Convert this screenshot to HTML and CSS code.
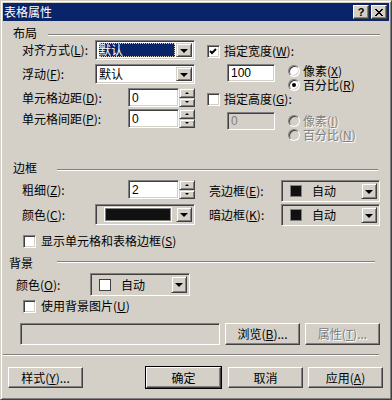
FILE: index.html
```html
<!DOCTYPE html>
<html>
<head>
    <title>表格属性</title>
    <link rel="stylesheet" href="styles.css">
</head>
<body>
    <div class="window">
        <div class="titlebar">
            <span class="title">表格属性</span>
            <div class="caption">
                <span class="cap-btn help">?</span>
                <span class="cap-btn">
                    <svg width="8" height="7" viewBox="0 0 8 7"><path d="M0 0L7 7M1 0L8 7M7 0L0 7M8 0L1 7" stroke="#000" stroke-width="1"/></svg>
                </span>
            </div>
        </div>

        <!-- 布局 -->
        <div class="group-head head-layout"><span class="head-text">布局</span><div class="line"></div></div>
        <div class="group-body">
            <div class="col-left">
                <div class="row row-select">
                    <label class="lbl lbl-short">对齐方式(<u>L</u>):</label>
                    <div class="combo combo-std">
                        <div class="combo-field"><span class="selected">默认</span></div>
                        <span class="drop"><i class="arrow"></i></span>
                    </div>
                </div>
                <div class="row row-select mt4">
                    <label class="lbl lbl-short">浮动(<u>F</u>):</label>
                    <div class="combo combo-std">
                        <div class="combo-field"><span class="value">默认</span></div>
                        <span class="drop"><i class="arrow"></i></span>
                    </div>
                </div>
                <div class="row row-spin mt4">
                    <label class="lbl lbl-long">单元格边距(<u>D</u>):</label>
                    <div class="field spin-field">0</div>
                    <div class="spin"><span class="spin-btn"><i class="arrow-up"></i></span><span class="spin-btn"><i class="arrow-small"></i></span></div>
                </div>
                <div class="row row-spin mt2">
                    <label class="lbl lbl-long">单元格间距(<u>P</u>):</label>
                    <div class="field spin-field">0</div>
                    <div class="spin"><span class="spin-btn"><i class="arrow-up"></i></span><span class="spin-btn"><i class="arrow-small"></i></span></div>
                </div>
            </div>
            <div class="col-right">
                <div class="row check-row check-first">
                    <span class="check"><svg width="9" height="9" viewBox="0 0 9 9"><path d="M1 4L3 6L7 2" fill="none" stroke="#000" stroke-width="2"/></svg></span>
                    <span>指定宽度(<u>W</u>):</span>
                </div>
                <div class="size-row">
                    <div class="field size-field">100</div>
                    <div class="radios">
                        <div class="radio-line"><span class="radio"></span>像素(<u>X</u>)</div>
                        <div class="radio-line"><span class="radio on"></span>百分比(<u>R</u>)</div>
                    </div>
                </div>
                <div class="row check-row">
                    <span class="check"></span>
                    <span>指定高度(<u>G</u>):</span>
                </div>
                <div class="size-row size-row-off">
                    <div class="field size-field disabled">0</div>
                    <div class="radios">
                        <div class="radio-line off"><span class="radio"></span>像素(<u>I</u>)</div>
                        <div class="radio-line off"><span class="radio"></span>百分比(<u>N</u>)</div>
                    </div>
                </div>
            </div>
        </div>

        <!-- 边框 -->
        <div class="group-head head-border"><span class="head-text">边框</span><div class="line"></div></div>
        <div class="group-body">
            <div class="col-left">
                <div class="row row-spin mt5">
                    <label class="lbl lbl-long">粗细(<u>Z</u>):</label>
                    <div class="field spin-field">2</div>
                    <div class="spin"><span class="spin-btn"><i class="arrow-up"></i></span><span class="spin-btn"><i class="arrow-small"></i></span></div>
                </div>
                <div class="row row-color mt5">
                    <label class="lbl lbl-short">颜色(<u>C</u>):</label>
                    <div class="combo combo-color">
                        <div class="combo-field"><span class="color-bar"></span></div>
                        <span class="drop"><i class="arrow"></i></span>
                    </div>
                </div>
            </div>
            <div class="col-right col-right-border">
                <div class="row row-pick mt5">
                    <label class="lbl lbl-pick">亮边框(<u>E</u>):</label>
                    <div class="combo combo-pick">
                        <div class="combo-field"><span class="swatch"></span><span>自动</span></div>
                        <span class="drop"><i class="arrow"></i></span>
                    </div>
                </div>
                <div class="row row-pick mt2">
                    <label class="lbl lbl-pick">暗边框(<u>K</u>):</label>
                    <div class="combo combo-pick">
                        <div class="combo-field"><span class="swatch"></span><span>自动</span></div>
                        <span class="drop"><i class="arrow"></i></span>
                    </div>
                </div>
            </div>
        </div>
        <div class="row check-row check-show">
            <span class="check"></span>
            <span>显示单元格和表格边框(<u>S</u>)</span>
        </div>

        <!-- 背景 -->
        <div class="group-head head-bg"><span class="head-text">背景</span><div class="line"></div></div>
        <div class="row row-bgcolor">
            <label class="lbl lbl-bg">颜色(<u>O</u>):</label>
            <div class="combo combo-pick combo-bg">
                <div class="combo-field"><span class="swatch swatch-white"></span><span>自动</span></div>
                <span class="drop"><i class="arrow"></i></span>
            </div>
        </div>
        <div class="row check-row check-image">
            <span class="check"></span>
            <span>使用背景图片(<u>U</u>)</span>
        </div>
        <div class="row file-row">
            <div class="field file-field disabled"></div>
            <button class="btn">浏览(<u>B</u>)...</button>
            <button class="btn btn-off">属性(<u>T</u>)...</button>
        </div>

        <div class="separator"></div>
        <div class="row footer">
            <button class="btn">样式(<u>Y</u>)...</button>
            <button class="btn btn-default">确定</button>
            <button class="btn btn-cancel">取消</button>
            <button class="btn btn-apply">应用(<u>A</u>)</button>
        </div>
    </div>
</body>
</html>
```

FILE: styles.css
```css
body { margin: 0; font: 12px/14px "Noto Sans CJK SC", sans-serif; color: #000; }
u { text-decoration: underline; text-underline-offset: 1px; }

.window { width: 392px; height: 400px; box-sizing: border-box; background: #d4d0c8; padding: 2px; border: 1px solid; border-color: #d4d0c8 #404040 #404040 #d4d0c8; box-shadow: inset 1px 1px #fff, inset -1px -1px #808080; }

.titlebar { height: 18px; background: #0a246a; color: #fff; display: flex; align-items: center; justify-content: space-between; padding: 0 2px 0 1px; }
.title { font-size: 12px; }
.caption { display: flex; gap: 2px; }
.cap-btn { width: 16px; height: 14px; box-sizing: border-box; background: #d4d0c8; display: flex; align-items: center; justify-content: center; color: #000; border: 1px solid; border-color: #fff #404040 #404040 #fff; box-shadow: inset -1px -1px #808080; }
.cap-btn.help { font: bold 11px/12px "Liberation Sans", sans-serif; }

/* group headings */
.group-head { display: flex; align-items: flex-start; height: 14px; }
.group-head .line { flex: 1; border-top: 1px solid #808080; border-bottom: 1px solid #fff; }
.head-layout { margin-top: 5px; padding-left: 10px; }
.head-layout .head-text { width: 35px; }
.head-layout .line { margin: 8px 9px 0 0; }
.head-border { margin-top: 19px; padding-left: 10px; }
.head-border .head-text { width: 44px; }
.head-border .line { margin: 8px 11px 0 0; }
.head-bg { margin-top: 8px; padding-left: 6px; }
.head-bg .head-text { width: 48px; }
.head-bg .line { margin: 5px 14px 0 0; }

.group-body { display: flex; padding-left: 19px; align-items: flex-start; }
.col-left { width: 173px; display: flex; flex-direction: column; }
.col-right { margin-left: 12px; display: flex; flex-direction: column; }
.col-right-border { margin-left: 14px; }

.row { display: flex; align-items: center; }
.mt2 { margin-top: 2px; }
.mt4 { margin-top: 4px; }
.mt5 { margin-top: 5px; }
.lbl { flex: none; white-space: nowrap; }
.lbl-short { width: 73px; }
.lbl-long { width: 106px; }
.lbl-pick { width: 72px; }
.lbl-bg { width: 74px; }

/* sunken fields */
.field, .combo, .check, .radio { box-sizing: border-box; border: 1px solid; border-color: #808080 #fff #fff #808080; box-shadow: inset 1px 1px #404040, inset -1px -1px #d4d0c8; background: #fff; }
.field { font: 12px/14px "Liberation Sans", sans-serif; padding: 2px 3px; display: flex; align-items: center; }
.field.disabled { background: #d4d0c8; color: #808080; }

.combo { display: flex; padding: 2px; }
.combo-field { flex: 1; display: flex; align-items: center; padding-left: 1px; }
.combo-std { width: 100px; height: 20px; }
.row-select { height: 20px; }
.selected { flex: 1; align-self: stretch; margin-right: 1px; background: #0a246a; color: #fff; display: flex; align-items: center; outline: 1px dotted #d4d0c8; outline-offset: -1px; }
.drop { width: 16px; flex: none; box-sizing: border-box; background: #d4d0c8; display: flex; align-items: center; justify-content: center; border: 1px solid; border-color: #d4d0c8 #404040 #404040 #d4d0c8; box-shadow: inset 1px 1px #fff, inset -1px -1px #808080; }
.arrow { width: 0; height: 0; border-left: 4px solid transparent; border-right: 4px solid transparent; border-top: 4px solid #000; margin-top: 1px; }

.row-spin { height: 19px; }
.spin-field { width: 51px; height: 19px; }
.spin { width: 16px; height: 19px; display: flex; flex-direction: column; }
.spin-btn { flex: 1; box-sizing: border-box; display: flex; align-items: center; justify-content: center; border: 1px solid; border-color: #d4d0c8 #404040 #404040 #d4d0c8; box-shadow: inset 1px 1px #fff, inset -1px -1px #808080; }
.arrow-up { width: 0; height: 0; border-left: 2px solid transparent; border-right: 2px solid transparent; border-bottom: 2px solid #000; }
.arrow-small { width: 0; height: 0; border-left: 2px solid transparent; border-right: 2px solid transparent; border-top: 2px solid #000; }

/* checkboxes and radios */
.check { width: 13px; height: 13px; flex: none; margin-right: 4px; display: flex; align-items: center; justify-content: center; }
.check svg { display: block; }
.check-row { height: 14px; }
.check-first { height: 22px; }
.check-show { margin-top: 8px; padding-left: 20px; }
.check-show .check, .check-image .check { margin-right: 5px; }
.check-image { margin-top: 3px; padding-left: 20px; }

.size-row { display: flex; align-items: flex-start; height: 30px; }
.size-field { width: 48px; height: 18px; margin: 2px 0 0 20px; }
.radios { margin: 2px 0 0 13px; display: flex; flex-direction: column; }
.radio-line { height: 14px; display: flex; align-items: center; }
.radio { width: 12px; height: 12px; border-radius: 50%; margin-right: 3px; position: relative; }
.radio.on::after { content: ""; position: absolute; left: 3px; top: 3px; width: 4px; height: 4px; border-radius: 50%; background: #000; }
.size-row-off { height: 36px; }
.size-row-off .size-field { margin-top: 6px; }
.size-row-off .radios { margin-top: 8px; }
.radio-line.off { color: #808080; text-shadow: 1px 1px #fff; }
.radio-line.off .radio { background: #d4d0c8; }

/* color pickers */
.row-color { height: 21px; }
.combo-color { width: 100px; height: 21px; background: #d4d0c8; }
.color-bar { flex: 1; height: 11px; margin: 0 5px 0 6px; background: #111; border: 1px solid #808080; box-shadow: 0 0 0 1px #fff; }
.row-pick { height: 22px; }
.combo-pick { width: 99px; height: 22px; background: #d4d0c8; }
.combo-pick .combo-field { padding-left: 6px; }
.swatch { width: 12px; height: 12px; box-sizing: border-box; background: #111; border: 1px solid #808080; margin-right: 10px; }
.swatch-white { background: #fff; border-color: #404040; }
.row-bgcolor { margin-top: 3px; height: 23px; padding-left: 13px; }
.combo-bg { width: 100px; height: 23px; }

/* buttons */
.btn { font: inherit; color: #000; height: 22px; width: 75px; padding: 0; box-sizing: border-box; background: #d4d0c8; border: 1px solid; border-color: #fff #404040 #404040 #fff; box-shadow: inset -1px -1px #808080, inset 1px 1px #d4d0c8; }
.btn-off { color: #808080; text-shadow: 1px 1px #fff; }
.file-row { margin-top: 10px; height: 22px; padding-left: 17px; }
.file-field { width: 200px; height: 22px; }
.file-row .btn { margin-left: 5px; }

.separator { margin: 9px 10px 0 0; border-top: 1px solid #808080; border-bottom: 1px solid #fff; }
.footer { margin-top: 11px; padding: 0 6px 0 5px; }
.footer .btn { height: 21px; }
.btn-default { margin-left: auto; outline: 1px solid #000; outline-offset: 0; }
.btn-cancel { margin-left: 7px; }
.btn-apply { margin-left: 5px; }
```
